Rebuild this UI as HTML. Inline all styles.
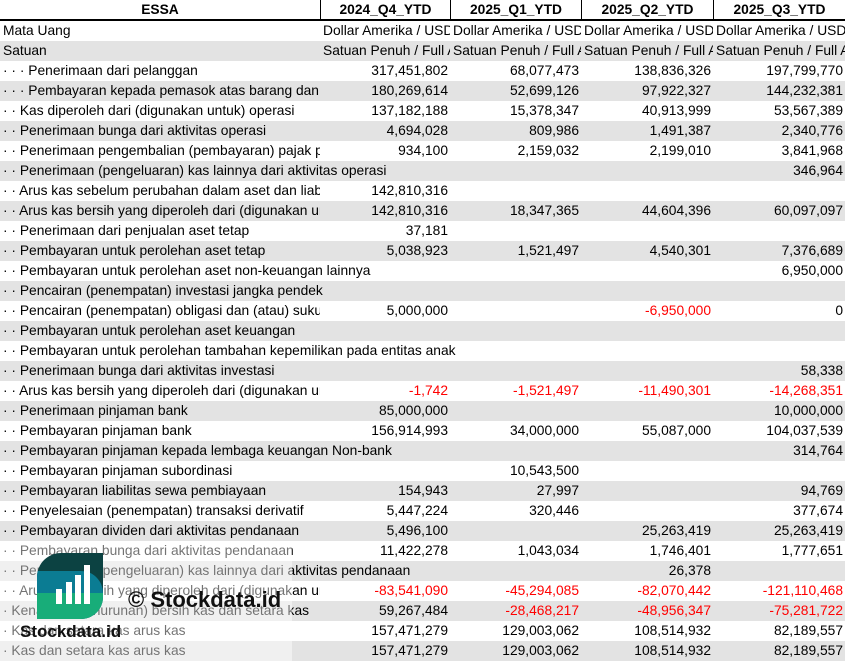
<!DOCTYPE html>
<html><head><meta charset="utf-8">
<style>
*{margin:0;padding:0;box-sizing:border-box}
body{width:845px;height:661px;overflow:hidden;background:#fff;font-family:"Liberation Sans",Arial,sans-serif;font-size:13.8px;color:#000;position:relative}
.hdr{position:absolute;left:0;top:0;width:845px;height:21px;border-bottom:2px solid #000;background:#fff}
.hdr div{position:absolute;top:0;height:19px;line-height:20px;text-align:center;font-weight:bold;border-right:1px solid #000}
.row{position:absolute;left:0;width:845px;height:20px;line-height:20px;white-space:nowrap}
.g{background:#e3e3e3}
.lb{position:absolute;left:3px;top:0}
.lb.c{width:317px;overflow:hidden}
.v{position:absolute;top:0;height:20px;text-align:right;padding-right:2px;overflow:hidden}
.v.l{text-align:left;padding:0 0 0 3px}
.r{color:#f00}
.c1{left:320px;width:130px}.c2{left:450px;width:131px}.c3{left:581px;width:132px}.c4{left:713px;width:132px}
.ov{position:absolute;left:0;top:541px;width:292px;height:120px;background:rgba(255,255,255,0.45)}
</style></head><body>
<div class="hdr">
<div style="left:0;width:321px">ESSA</div>
<div style="left:321px;width:130px">2024_Q4_YTD</div>
<div style="left:451px;width:131px">2025_Q1_YTD</div>
<div style="left:582px;width:132px">2025_Q2_YTD</div>
<div style="left:714px;width:131px;border-right:none">2025_Q3_YTD</div>
</div>
<div class="row" style="top:21px"><span class="lb c">Mata Uang</span><span class="v l c1">Dollar Amerika / USD</span><span class="v l c2">Dollar Amerika / USD</span><span class="v l c3">Dollar Amerika / USD</span><span class="v l c4">Dollar Amerika / USD</span></div>
<div class="row g" style="top:41px"><span class="lb c">Satuan</span><span class="v l c1">Satuan Penuh / Full Amount</span><span class="v l c2">Satuan Penuh / Full Amount</span><span class="v l c3">Satuan Penuh / Full Amount</span><span class="v l c4">Satuan Penuh / Full Amount</span></div>
<div class="row" style="top:61px"><span class="lb c">· · · Penerimaan dari pelanggan</span><span class="v c1">317,451,802</span><span class="v c2">68,077,473</span><span class="v c3">138,836,326</span><span class="v c4">197,799,770</span></div>
<div class="row g" style="top:81px"><span class="lb c">· · · Pembayaran kepada pemasok atas barang dan jasa</span><span class="v c1">180,269,614</span><span class="v c2">52,699,126</span><span class="v c3">97,922,327</span><span class="v c4">144,232,381</span></div>
<div class="row" style="top:101px"><span class="lb c">· · Kas diperoleh dari (digunakan untuk) operasi</span><span class="v c1">137,182,188</span><span class="v c2">15,378,347</span><span class="v c3">40,913,999</span><span class="v c4">53,567,389</span></div>
<div class="row g" style="top:121px"><span class="lb c">· · Penerimaan bunga dari aktivitas operasi</span><span class="v c1">4,694,028</span><span class="v c2">809,986</span><span class="v c3">1,491,387</span><span class="v c4">2,340,776</span></div>
<div class="row" style="top:141px"><span class="lb c">· · Penerimaan pengembalian (pembayaran) pajak penghasilan</span><span class="v c1">934,100</span><span class="v c2">2,159,032</span><span class="v c3">2,199,010</span><span class="v c4">3,841,968</span></div>
<div class="row g" style="top:161px"><span class="lb">· · Penerimaan (pengeluaran) kas lainnya dari aktivitas operasi</span><span class="v c4">346,964</span></div>
<div class="row" style="top:181px"><span class="lb c">· · Arus kas sebelum perubahan dalam aset dan liabilitas</span><span class="v c1">142,810,316</span></div>
<div class="row g" style="top:201px"><span class="lb c">· · Arus kas bersih yang diperoleh dari (digunakan untuk)</span><span class="v c1">142,810,316</span><span class="v c2">18,347,365</span><span class="v c3">44,604,396</span><span class="v c4">60,097,097</span></div>
<div class="row" style="top:221px"><span class="lb c">· · Penerimaan dari penjualan aset tetap</span><span class="v c1">37,181</span></div>
<div class="row g" style="top:241px"><span class="lb c">· · Pembayaran untuk perolehan aset tetap</span><span class="v c1">5,038,923</span><span class="v c2">1,521,497</span><span class="v c3">4,540,301</span><span class="v c4">7,376,689</span></div>
<div class="row" style="top:261px"><span class="lb">· · Pembayaran untuk perolehan aset non-keuangan lainnya</span><span class="v c4">6,950,000</span></div>
<div class="row g" style="top:281px"><span class="lb">· · Pencairan (penempatan) investasi jangka pendek</span></div>
<div class="row" style="top:301px"><span class="lb c">· · Pencairan (penempatan) obligasi dan (atau) sukuk</span><span class="v c1">5,000,000</span><span class="v c3 r">-6,950,000</span><span class="v c4">0</span></div>
<div class="row g" style="top:321px"><span class="lb">· · Pembayaran untuk perolehan aset keuangan</span></div>
<div class="row" style="top:341px"><span class="lb">· · Pembayaran untuk perolehan tambahan kepemilikan pada entitas anak</span></div>
<div class="row g" style="top:361px"><span class="lb">· · Penerimaan bunga dari aktivitas investasi</span><span class="v c4">58,338</span></div>
<div class="row" style="top:381px"><span class="lb c">· · Arus kas bersih yang diperoleh dari (digunakan untuk)</span><span class="v c1 r">-1,742</span><span class="v c2 r">-1,521,497</span><span class="v c3 r">-11,490,301</span><span class="v c4 r">-14,268,351</span></div>
<div class="row g" style="top:401px"><span class="lb c">· · Penerimaan pinjaman bank</span><span class="v c1">85,000,000</span><span class="v c4">10,000,000</span></div>
<div class="row" style="top:421px"><span class="lb c">· · Pembayaran pinjaman bank</span><span class="v c1">156,914,993</span><span class="v c2">34,000,000</span><span class="v c3">55,087,000</span><span class="v c4">104,037,539</span></div>
<div class="row g" style="top:441px"><span class="lb">· · Pembayaran pinjaman kepada lembaga keuangan Non-bank</span><span class="v c4">314,764</span></div>
<div class="row" style="top:461px"><span class="lb c">· · Pembayaran pinjaman subordinasi</span><span class="v c2">10,543,500</span></div>
<div class="row g" style="top:481px"><span class="lb c">· · Pembayaran liabilitas sewa pembiayaan</span><span class="v c1">154,943</span><span class="v c2">27,997</span><span class="v c4">94,769</span></div>
<div class="row" style="top:501px"><span class="lb c">· · Penyelesaian (penempatan) transaksi derivatif</span><span class="v c1">5,447,224</span><span class="v c2">320,446</span><span class="v c4">377,674</span></div>
<div class="row g" style="top:521px"><span class="lb c">· · Pembayaran dividen dari aktivitas pendanaan</span><span class="v c1">5,496,100</span><span class="v c3">25,263,419</span><span class="v c4">25,263,419</span></div>
<div class="row" style="top:541px"><span class="lb c">· · Pembayaran bunga dari aktivitas pendanaan</span><span class="v c1">11,422,278</span><span class="v c2">1,043,034</span><span class="v c3">1,746,401</span><span class="v c4">1,777,651</span></div>
<div class="row g" style="top:561px"><span class="lb">· · Penerimaan (pengeluaran) kas lainnya dari aktivitas pendanaan</span><span class="v c3">26,378</span></div>
<div class="row" style="top:581px"><span class="lb c">· · Arus kas bersih yang diperoleh dari (digunakan untuk)</span><span class="v c1 r">-83,541,090</span><span class="v c2 r">-45,294,085</span><span class="v c3 r">-82,070,442</span><span class="v c4 r">-121,110,468</span></div>
<div class="row g" style="top:601px"><span class="lb c">· Kenaikan (penurunan) bersih kas dan setara kas</span><span class="v c1">59,267,484</span><span class="v c2 r">-28,468,217</span><span class="v c3 r">-48,956,347</span><span class="v c4 r">-75,281,722</span></div>
<div class="row" style="top:621px"><span class="lb c">· Kas dan setara kas arus kas</span><span class="v c1">157,471,279</span><span class="v c2">129,003,062</span><span class="v c3">108,514,932</span><span class="v c4">82,189,557</span></div>
<div class="row g" style="top:641px"><span class="lb c">· Kas dan setara kas arus kas</span><span class="v c1">157,471,279</span><span class="v c2">129,003,062</span><span class="v c3">108,514,932</span><span class="v c4">82,189,557</span></div>
<div class="ov"></div>
<svg style="position:absolute;left:37px;top:553px" width="66" height="66" viewBox="0 0 66 66">
<defs><clipPath id="cp"><path d="M24 0H66V44A22 22 0 0 1 44 66H0V24A24 24 0 0 1 24 0Z"/></clipPath></defs>
<g clip-path="url(#cp)">
<rect x="0" y="0" width="66" height="66" fill="#0c4242"/>
<path d="M0 18H44A22 22 0 0 1 66 40V66H0Z" fill="#0b7c93"/>
<rect x="0" y="40" width="66" height="26" fill="#18ad79"/>
</g>
<rect x="19" y="36" width="6" height="15" fill="#fff"/>
<rect x="29" y="29" width="6" height="22" fill="#fff"/>
<rect x="38" y="22" width="6" height="29" fill="#fff"/>
<rect x="47" y="12" width="6" height="39" fill="#fff"/>
</svg>
<div style="position:absolute;left:128px;top:587px;font-weight:bold;font-size:22px;line-height:26px;color:#111;white-space:nowrap">© Stockdata.id</div>
<div style="position:absolute;left:20px;top:622px;font-weight:bold;font-size:17px;line-height:20px;color:#111;white-space:nowrap">Stockdata.id</div>
</body></html>
